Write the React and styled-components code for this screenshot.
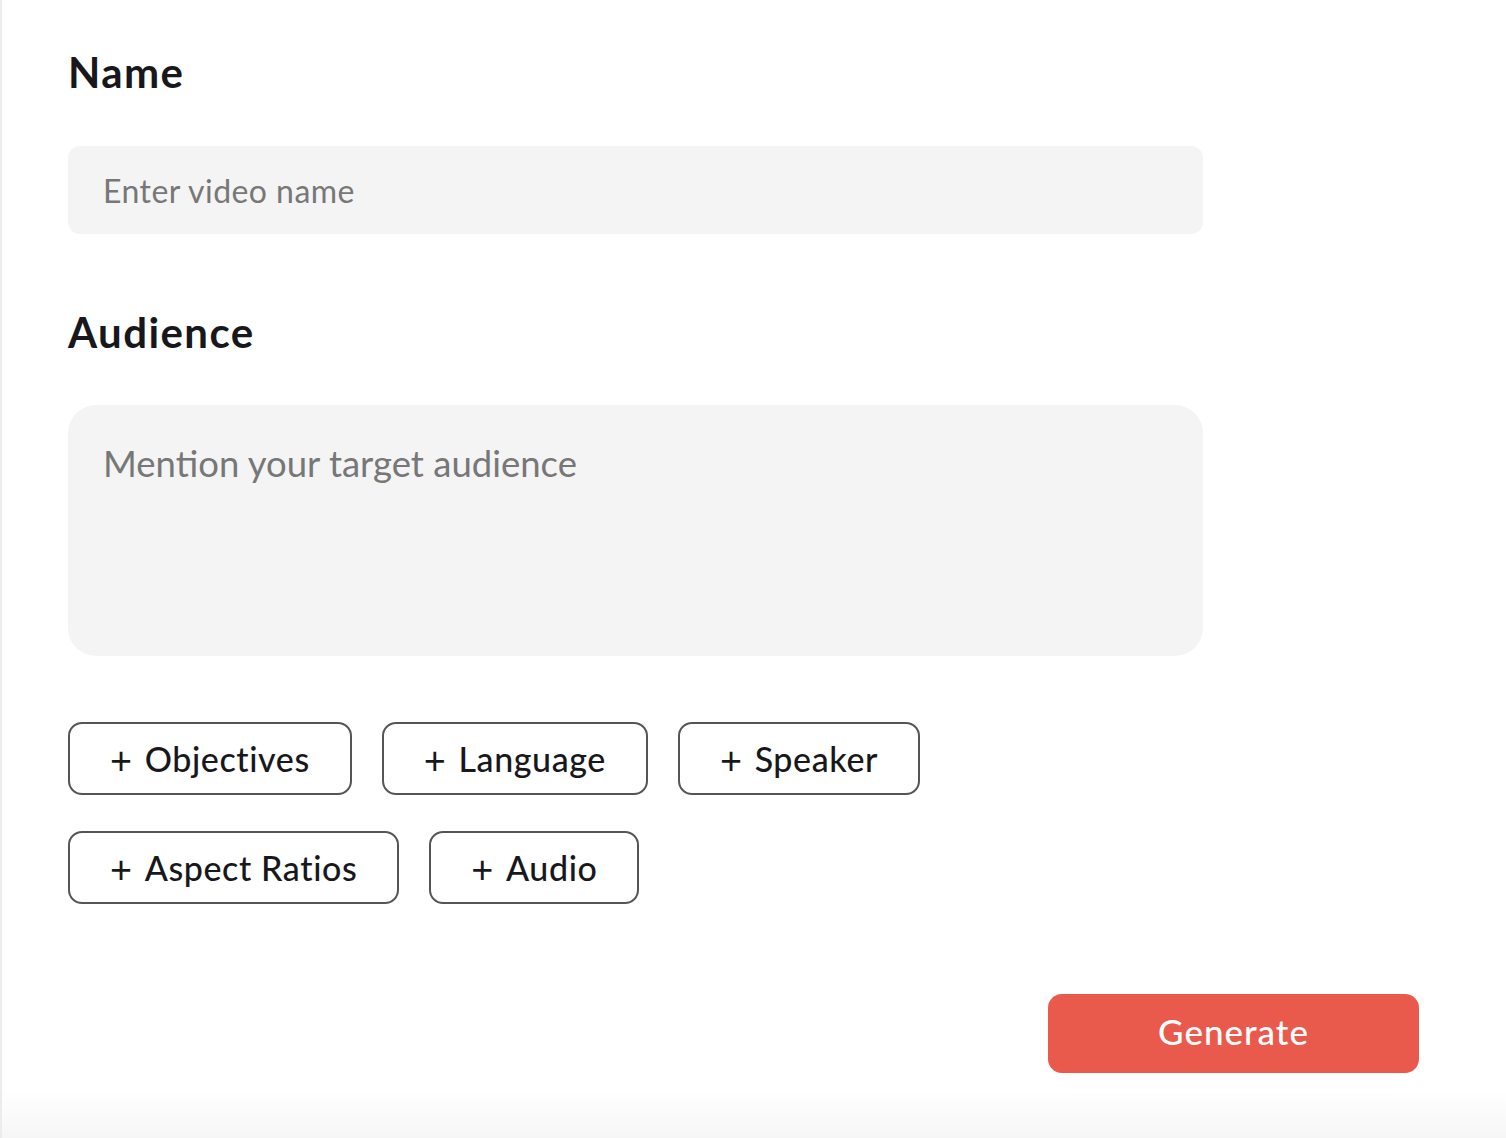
import styled, { createGlobalStyle } from "styled-components";

const GlobalStyle = createGlobalStyle`
    html, body {
        margin: 0;
        padding: 0;
        background: #ffffff;
    }
    body {
        font-family: Lato, "Noto Sans", sans-serif;
    }
`;

const Page = styled.div`
    min-height: 1138px;
    box-sizing: border-box;
    border-left: 2px solid #ececec;
    padding: 40px 0 0 66px;
    background: linear-gradient(to bottom, #ffffff 0px, #ffffff 1090px, #f6f6f6 1138px);
`;

const Form = styled.div`
    width: 1351px;
    display: flex;
    flex-direction: column;
`;

const Label = styled.h2`
    margin: 0;
    margin-top: ${({ $gap }) => $gap || "0"};
    font-size: 42px;
    line-height: 64px;
    font-weight: 700;
    color: #17171c;
    letter-spacing: 1.4px;
`;

const Field = styled.div`
    width: 1135px;
    box-sizing: border-box;
    background: #f4f4f4;
    border-radius: ${({ $tall }) => ($tall ? "28px" : "12px")};
    height: ${({ $tall }) => ($tall ? "251px" : "88px")};
    padding: ${({ $tall }) => ($tall ? "36px 35px" : "0 35px")};
    display: flex;
    align-items: ${({ $tall }) => ($tall ? "flex-start" : "center")};
    margin-top: ${({ $tall }) => ($tall ? "41px" : "42px")};
    font-size: ${({ $tall }) => ($tall ? "36.5px" : "32px")};
    letter-spacing: ${({ $tall }) => ($tall ? "0" : "0.45px")};
    color: #777777;
`;

const Chips = styled.div`
    display: flex;
    flex-direction: column;
    gap: 36px;
    margin-top: 66px;
`;

const ChipRow = styled.div`
    display: flex;
    gap: 30px;
`;

const Chip = styled.button`
    height: 73px;
    box-sizing: border-box;
    padding: 0 40px;
    border: 2px solid #555555;
    border-radius: 14px;
    background: #ffffff;
    font-family: inherit;
    font-size: 34px;
    font-weight: 500;
    letter-spacing: 0.6px;
    color: #18181c;
    display: flex;
    align-items: center;
    gap: 12px;
`;

const Plus = styled.span`
    font-size: 38px;
    font-weight: 400;
`;

const Footer = styled.div`
    display: flex;
    justify-content: flex-end;
    margin-top: 90px;
`;

const Generate = styled.button`
    width: 371px;
    height: 79px;
    border: none;
    border-radius: 14px;
    background: #ea5a4c;
    color: #ffffff;
    font-family: inherit;
    font-size: 35px;
    font-weight: 500;
    letter-spacing: 1px;
    padding-bottom: 6px;
`;

const chipRows = [
    ["Objectives", "Language", "Speaker"],
    ["Aspect Ratios", "Audio"],
];

const App = () => {
    return (
        <>
            <GlobalStyle />
            <Page>
                <Form>
                    <Label>Name</Label>
                    <Field>Enter video name</Field>

                    <Label $gap="66px">Audience</Label>
                    <Field $tall>Mention your target audience</Field>

                    <Chips>
                        {chipRows.map((row, i) => (
                            <ChipRow key={i}>
                                {row.map((name) => (
                                    <Chip key={name}>
                                        <Plus>+</Plus>
                                        {name}
                                    </Chip>
                                ))}
                            </ChipRow>
                        ))}
                    </Chips>

                    <Footer>
                        <Generate>Generate</Generate>
                    </Footer>
                </Form>
            </Page>
        </>
    );
};

export default App;
